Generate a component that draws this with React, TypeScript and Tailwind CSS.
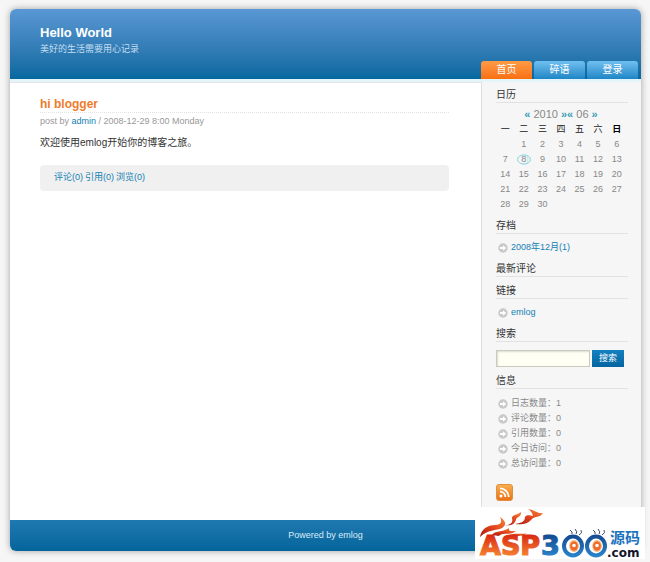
import type { ReactNode } from 'react';

const tabs = [
  { label: '首页', active: true },
  { label: '碎语', active: false },
  { label: '登录', active: false }
];

const weekdays = ['一', '二', '三', '四', '五', '六', '日'];

const weeks = [
  ['', '1', '2', '3', '4', '5', '6'],
  ['7', '8', '9', '10', '11', '12', '13'],
  ['14', '15', '16', '17', '18', '19', '20'],
  ['21', '22', '23', '24', '25', '26', '27'],
  ['28', '29', '30', '', '', '', '']
];

const today = '8';

const stats = [
  { label: '日志数量', value: 1 },
  { label: '评论数量', value: 0 },
  { label: '引用数量', value: 0 },
  { label: '今日访问', value: 0 },
  { label: '总访问量', value: 0 }
];

const ArrowBullet = () => (
  <svg className="h-[10px] w-[10px] shrink-0" viewBox="0 0 10 10" aria-hidden="true">
    <circle cx="5" cy="5" r="4.700" fill="#c9c9c9" />
    <path d="M2 4h3V2.200L8.200 5 5 7.800V6H2z" fill="#fff" />
  </svg>
);

const Widget = ({ title, children }: { title: string; children?: ReactNode }) => (
  <section>
    <h3 className="h-4 border-b border-[#e2e2e2] text-[10px] leading-4 text-[#333]">{title}</h3>
    {children}
  </section>
);

const Bullet = ({ children }: { children: ReactNode }) => (
  <li className="flex h-[15px] items-center gap-[3px] pl-0.5">
    <ArrowBullet />
    <span>{children}</span>
  </li>
);

const Calendar = () => (
  <div className="mt-1 w-[130px]">
    <div className="text-center text-[11px] leading-[15px] text-[#888]">
      <a href="#" className="font-bold text-[#3a9db5]">«</a> 2010{' '}
      <a href="#" className="font-bold text-[#3a9db5]">»</a>
      <a href="#" className="font-bold text-[#3a9db5]">«</a> 06{' '}
      <a href="#" className="font-bold text-[#3a9db5]">»</a>
    </div>
    <table className="w-full table-fixed text-center leading-[15px]">
      <thead>
        <tr>
          {weekdays.map((day) => (
            <th key={day} className="h-[15px] p-0 font-normal text-[#222] last:font-bold last:text-black">
              {day}
            </th>
          ))}
        </tr>
      </thead>
      <tbody>
        {weeks.map((week, index) => (
          <tr key={index}>
            {week.map((day, column) => (
              <td key={column} className="h-[15px] p-0">
                {day === today ? (
                  <span className="relative block">
                    <svg className="absolute inset-x-0 top-0.5 mx-auto h-[11px] w-[14px]" viewBox="0 0 14 11" aria-hidden="true">
                      <ellipse cx="7" cy="5.5" rx="6.4" ry="4.6" fill="none" stroke="#7fcfde" />
                      <path d="M9 1.500c2.500 1.500 2.500 6 0 8" fill="none" stroke="#a9dfe8" strokeWidth=".8" />
                    </svg>
                    <span className="relative">{day}</span>
                  </span>
                ) : (
                  day
                )}
              </td>
            ))}
          </tr>
        ))}
      </tbody>
    </table>
  </div>
);

const RssIcon = () => (
  <svg className="h-[17px] w-[17px]" viewBox="0 0 17 17" aria-hidden="true">
    <defs>
      <linearGradient id="rss" x1="0" y1="0" x2="0" y2="1">
        <stop offset="0" stopColor="#f9b052" />
        <stop offset="1" stopColor="#ea6f14" />
      </linearGradient>
    </defs>
    <rect x=".5" y=".5" width="16" height="16" rx="2.500" fill="url(#rss)" stroke="#dd9040" />
    <circle cx="5" cy="12" r="1.500" fill="#fff" />
    <path d="M4 7.600a5.400 5.400 0 0 1 5.400 5.400M4 4.300a8.700 8.700 0 0 1 8.700 8.700" fill="none" stroke="#fff" strokeWidth="1.700" />
  </svg>
);

const Eye = ({ cx }: { cx: number }) => (
  <g>
    <ellipse cx={cx} cy="39" rx="9" ry="9.500" fill="#fff" stroke="url(#sea)" strokeWidth="4" />
    <ellipse cx={cx + 1} cy="39" rx="4.800" ry="6" fill="#f7b27a" />
    <ellipse cx={cx + 1} cy="39" rx="3.800" ry="4.500" fill="#ec6a26" />
    <circle cx={cx + 1} cy="38.500" r="1.800" fill="#fff" />
    <path
      d={`M${cx - 1} 27q1-2-2-4M${cx + 3} 27q2-2-1-5M${cx + 6} 28q4-2 2-5`}
      fill="none"
      stroke="#3d5068"
      strokeWidth="1"
    />
  </g>
);

const SiteLogo = () => (
  <svg className="h-[52px] w-[170px] overflow-visible" viewBox="0 0 170 52" role="img" aria-label="ASP300源码.com">
    <defs>
      <linearGradient id="fire" gradientUnits="userSpaceOnUse" x1="0" y1="28" x2="0" y2="49">
        <stop offset="0" stopColor="#d92a12" />
        <stop offset="1" stopColor="#f58233" />
      </linearGradient>
      <linearGradient id="flame" x1="0" y1="1" x2="1" y2="0">
        <stop offset="0" stopColor="#a81a12" />
        <stop offset=".5" stopColor="#e2431c" />
        <stop offset="1" stopColor="#f58a3c" />
      </linearGradient>
      <linearGradient id="sea" gradientUnits="userSpaceOnUse" x1="0" y1="28" x2="0" y2="50">
        <stop offset="0" stopColor="#154a90" />
        <stop offset="1" stopColor="#2a85cc" />
      </linearGradient>
    </defs>
    <path d="M5 30C6 22 13 18 20 18C27 18 27 14 25 10C31 14 32 18 27 21C21 24 13 22 5 30Z" fill="url(#flame)" />
    <path d="M30 18C37 18 38 15 37 11C37 8 42 8 46 5C47 10 41 10 41 13C39 18 35 19 30 18Z" fill="url(#flame)" />
    <path d="M40 17C47 16 50 14 50 10C51 8 54 8 58 9C57 5 55 3 53 2C60 3 63 7 68 6C65 11 60 9 57 12C53 17 46 18 40 17Z" fill="url(#flame)" />
    <path d="M17 28C20 23 27 26 34 21C33 25 37 24 41 24C35 29 28 25 24 29Z" fill="url(#flame)" />
    <path d="M34 29C38 25 44 28 52 26C47 30 43 28 40 30Z" fill="url(#flame)" />
    <g className="font-['DejaVu_Sans',sans-serif] font-bold">
      <text x="5" y="48" fontSize="27" fill="url(#fire)" stroke="url(#fire)" strokeWidth="1.200">ASP</text>
      <text x="66" y="48" fontSize="27" fill="url(#sea)" stroke="url(#sea)" strokeWidth="1.200">3</text>
      <text x="132" y="50" fontSize="12" fill="#12162a">.com</text>
    </g>
    <text x="135" y="36" fontSize="15" fill="#1c72bc" className="font-['Noto_Sans_CJK_SC',sans-serif] font-bold">源码</text>
    <Eye cx={98} />
    <Eye cx={121} />
  </svg>
);

const App = () => (
  <div className="relative bg-[#f6f6f6] pt-[9px] pr-[9px] pb-[11px] pl-[10px] font-['Liberation_Sans','Noto_Sans_CJK_SC',sans-serif] text-[9px] text-[#888]">
    <div className="overflow-hidden rounded-md bg-white shadow-[0_0_7px_rgba(0,0,0,0.35)]">
      <header className="flex h-[70px] justify-between bg-linear-to-b from-[#5998d4] to-[#03689f]">
        <div className="pt-4 pl-[30px]">
          <h1 className="text-[13px] leading-4 font-bold text-white">Hello World</h1>
          <p className="leading-4 text-[#c5def0]">美好的生活需要用心记录</p>
        </div>
        <nav className="flex items-end gap-0.5 pr-[3px]">
          {tabs.map((tab) => (
            <a
              key={tab.label}
              href="#"
              className={
                tab.active
                  ? 'h-[18px] w-[51px] rounded-t-[3px] bg-linear-to-b from-[#ff9b45] to-[#f96f0c] text-center text-[10px] leading-[18px] text-white'
                  : 'h-[18px] w-[51px] rounded-t-[3px] bg-linear-to-b from-[#6fc0f0] to-[#1a86c6] text-center text-[10px] leading-[18px] text-white'
              }
            >
              {tab.label}
            </a>
          ))}
        </nav>
      </header>
      <div className="h-[3px] bg-[#e3f5fb]" />

      <div className="flex">
        <main className="flex-1 border-t border-[#e5e5e5] pt-3.5 pr-8 pl-[30px]">
          <article>
            <h2 className="h-4 border-b border-dotted border-[#e2e2e2] text-[12px] leading-[15px] font-bold text-[#ee7c2b]">
              hi blogger
            </h2>
            <p className="leading-4 text-[#999]">
              post by <a href="#" className="text-[#1480b5]">admin</a> / 2008-12-29 8:00 Monday
            </p>
            <p className="mt-1.5 text-[10px] leading-4 text-[#333]">欢迎使用emlog开始你的博客之旅。</p>
            <div className="mt-3.5 flex h-[26px] items-center gap-0.5 rounded bg-[#f0f0f0] px-3.5 text-[#1480b5]">
              <a href="#">评论(0)</a>
              <a href="#">引用(0)</a>
              <a href="#">浏览(0)</a>
            </div>
          </article>
        </main>

        <aside className="flex w-[160px] flex-col gap-1.5 border-l border-[#dedede] bg-[#f6f6f6] pt-[5px] pr-[13px] pb-[19px] pl-3.5">
          <Widget title="日历">
            <Calendar />
          </Widget>
          <Widget title="存档">
            <ul className="mt-1.5">
              <Bullet><a href="#" className="text-[#1480b5]">2008年12月(1)</a></Bullet>
            </ul>
          </Widget>
          <Widget title="最新评论" />
          <Widget title="链接">
            <ul className="mt-1.5">
              <Bullet><a href="#" className="text-[#1480b5]">emlog</a></Bullet>
            </ul>
          </Widget>
          <Widget title="搜索">
            <form className="mt-2 flex gap-0.5" onSubmit={(e) => e.preventDefault()}>
              <input
                type="text"
                aria-label="搜索"
                className="h-[17px] w-[94px] border border-[#c9c9c0] bg-[#fffff4] px-1 shadow-[inset_1px_1px_2px_#dcdccc] outline-none"
              />
              <button type="submit" className="h-[17px] w-8 bg-linear-to-b from-[#1480c0] to-[#0465a0] text-white">
                搜索
              </button>
            </form>
          </Widget>
          <Widget title="信息">
            <ul className="mt-[7px]">
              {stats.map((item) => (
                <Bullet key={item.label}>{item.label}：{item.value}</Bullet>
              ))}
            </ul>
            <a href="#" aria-label="RSS" className="mt-[13px] block w-[17px]">
              <RssIcon />
            </a>
          </Widget>
        </aside>
      </div>

      <footer className="h-[31px] bg-linear-to-b from-[#1f79b1] to-[#03659b] text-center leading-[30px] text-[#d8ecf8]">
        Powered by <a href="#">emlog</a>
      </footer>
    </div>

    <div className="absolute right-[5px] bottom-[3px] bg-white">
      <SiteLogo />
    </div>
  </div>
);

export default App;
